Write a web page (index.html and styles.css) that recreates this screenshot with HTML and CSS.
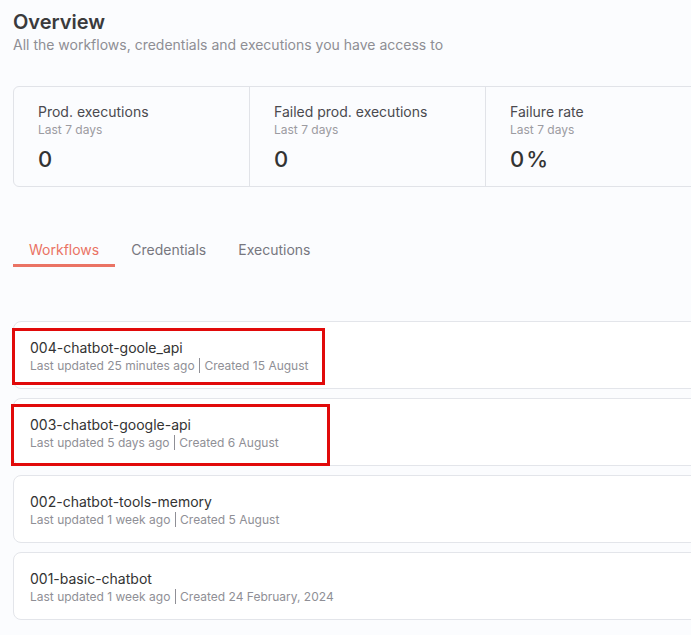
FILE: index.html
```html
<!DOCTYPE html>
<html lang="en">
<head>
    <meta charset="UTF-8">
    <meta name="viewport" content="width=device-width, initial-scale=1.0">
    <title>Overview</title>
    <link rel="stylesheet" href="styles.css">
</head>
<body>
    <div class="overview">
        <div class="page-header">
            <h1>Overview</h1>
            <p class="subtitle">All the workflows, credentials and executions you have access to</p>
        </div>

        <!-- Insights summary -->
        <div class="stats">
            <div class="stat">
                <div class="stat-label">Prod. executions</div>
                <div class="stat-period">Last 7 days</div>
                <div class="stat-value">0</div>
            </div>
            <div class="stat">
                <div class="stat-label">Failed prod. executions</div>
                <div class="stat-period">Last 7 days</div>
                <div class="stat-value">0</div>
            </div>
            <div class="stat">
                <div class="stat-label">Failure rate</div>
                <div class="stat-period">Last 7 days</div>
                <div class="stat-value">0<span class="unit">%</span></div>
            </div>
            <div class="stat"></div>
        </div>

        <div class="tabs">
            <div class="tab active">Workflows</div>
            <div class="tab">Credentials</div>
            <div class="tab">Executions</div>
        </div>

        <div class="workflow-list">
            <div class="workflow-card">
                <div class="workflow-name">004-chatbot-goole_api</div>
                <div class="workflow-meta">Last updated 25 minutes ago <span class="sep"></span> Created 15 August</div>
                <div class="highlight highlight-1"></div>
            </div>
            <div class="workflow-card">
                <div class="workflow-name">003-chatbot-google-api</div>
                <div class="workflow-meta">Last updated 5 days ago <span class="sep"></span> Created 6 August</div>
                <div class="highlight highlight-2"></div>
            </div>
            <div class="workflow-card">
                <div class="workflow-name">002-chatbot-tools-memory</div>
                <div class="workflow-meta">Last updated 1 week ago <span class="sep"></span> Created 5 August</div>
            </div>
            <div class="workflow-card">
                <div class="workflow-name">001-basic-chatbot</div>
                <div class="workflow-meta">Last updated 1 week ago <span class="sep"></span> Created 24 February, 2024</div>
            </div>
        </div>
    </div>
</body>
</html>
```

FILE: styles.css
```css
html {
    overflow: hidden;
}
body {
    margin: 0;
    background-color: #fbfcfe;
    font-family: Inter, "Noto Sans", sans-serif;
    color: #363636;
}
.overview {
    width: 960px;
    padding: 9px 0 0 13px;
}
h1 {
    margin: 0;
    font-size: 20px;
    font-weight: 600;
    line-height: 26px;
    color: #3a3a3c;
}
.subtitle {
    margin: 1px 0 0;
    font-size: 14px;
    line-height: 18px;
    color: #8e8e94;
}

/* Summary boxes */
.stats {
    display: flex;
    margin-top: 32px;
    height: 99px;
    border: 1px solid #e1e3e8;
    border-radius: 6px;
}
.stat {
    width: 236px;
    padding: 16px 0 0 24px;
    box-sizing: border-box;
    border-right: 1px solid #e1e3e8;
}
.stat:last-child {
    border-right: none;
}
.stat-label {
    font-size: 14px;
    line-height: 18px;
    color: #4a4a4f;
}
.stat-period {
    margin-top: 1px;
    font-size: 12px;
    line-height: 16px;
    color: #9b9ba1;
}
.stat-value {
    margin-top: 6px;
    font-size: 22px;
    font-weight: 500;
    line-height: 30px;
    color: #333;
}
.unit {
    margin-left: 2px;
}

/* Tabs */
.tabs {
    display: flex;
    margin-top: 53px;
}
.tab {
    padding: 0 16px 7px;
    font-size: 14px;
    line-height: 20px;
    color: #77777f;
}
.tab.active {
    color: #ea7364;
    border-bottom: 3px solid #ea7364;
    padding-bottom: 4px;
}

/* Workflow list */
.workflow-list {
    margin-top: 54px;
    display: flex;
    flex-direction: column;
    gap: 9px;
}
.workflow-card {
    position: relative;
    height: 68px;
    padding: 17px 0 0 16px;
    box-sizing: border-box;
    background-color: #fff;
    border: 1px solid #e3e5ea;
    border-radius: 8px;
}
.workflow-name {
    font-size: 14px;
    line-height: 18px;
    color: #333;
}
.workflow-meta {
    margin-top: 1px;
    font-size: 12px;
    line-height: 16px;
    color: #8f8f96;
}
.sep {
    display: inline-block;
    width: 1px;
    height: 15px;
    margin: 0 1px;
    vertical-align: -3px;
    background-color: #8f8f96;
}

/* Red annotation boxes drawn over the screenshot */
.highlight {
    position: absolute;
    border: 3px solid #e10a0a;
    box-sizing: border-box;
}
.highlight-1 {
    left: -2px;
    top: 6px;
    width: 313px;
    height: 57px;
}
.highlight-2 {
    left: -3px;
    top: 5px;
    width: 319px;
    height: 62px;
}
```
